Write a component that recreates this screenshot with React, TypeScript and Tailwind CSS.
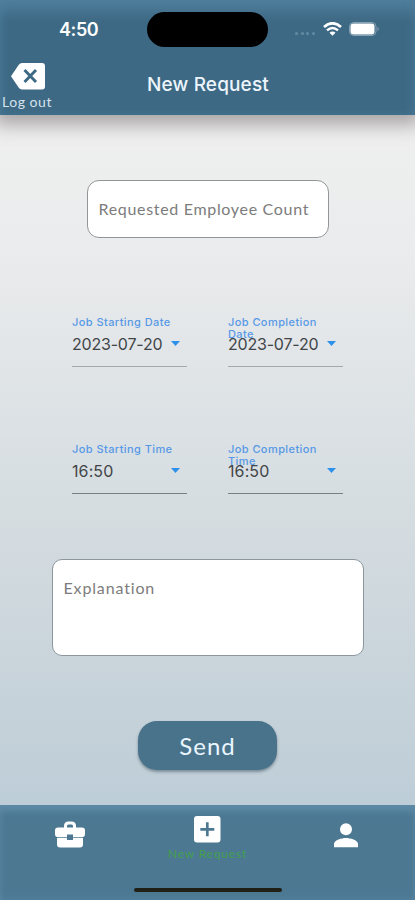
import React from "react";

function BackspaceIcon() {
  return (
    <svg width="34" height="27" viewBox="0 0 34 27" className="block">
      <path d="M11 0H31Q34 0 34 3V23.500Q34 26.500 31 26.500H11Q9 26.500 7.800 24.800L0 13.200L7.800 1.700Q9 0 11 0Z" fill="#fff" />
      <path d="M13.500 7L25 19M25 7L13.500 19" stroke="#3e6984" strokeWidth="2.900" fill="none" />
    </svg>
  );
}

function WifiIcon() {
  return (
    <svg width="19" height="14" viewBox="0 0 19 14" className="block">
      <path d="M1 5Q9.500 -2.500 18 5" fill="none" stroke="#fff" strokeWidth="2.700" />
      <path d="M4 8.400Q9.500 3.500 15 8.400" fill="none" stroke="#fff" strokeWidth="2.500" />
      <path d="M6.500 10.800Q9.500 8.200 12.500 10.800L9.500 13.800Z" fill="#fff" />
    </svg>
  );
}

function BatteryIcon() {
  return (
    <svg width="31" height="15" viewBox="0 0 31 15" className="block">
      <rect x="0.500" y="0.500" width="26.500" height="13" rx="4" fill="none" stroke="#86a2b4" />
      <rect x="1.500" y="1.500" width="24" height="11" rx="3" fill="#fff" />
      <path d="M28.500 4.800Q31 7 28.500 9.200Z" fill="#86a2b4" />
    </svg>
  );
}

function BriefcaseIcon() {
  return (
    <svg width="30" height="27" viewBox="0 0 30 27" className="block">
      <path d="M10.500 7V5Q10.500 2 13.500 2H16.500Q19.500 2 19.500 5V7" stroke="#fff" strokeWidth="3" fill="none" />
      <path d="M3 6.500H27Q30 6.500 30 9.500V13Q30 16.300 26.500 16.300H18V13.500H12V16.300H3.500Q0 16.300 0 13V9.500Q0 6.500 3 6.500Z" fill="#fff" />
      <path d="M2 17H12V19H18V17H28V23.500Q28 26.500 25 26.500H5Q2 26.500 2 23.500Z" fill="#fff" />
    </svg>
  );
}

function PlusIcon() {
  return (
    <svg width="27" height="27" viewBox="0 0 27 27" className="block">
      <rect width="26.500" height="26.500" rx="3" fill="#fff" />
      <path d="M13.300 6.300V20.300M6.300 13.300H20.300" stroke="#4c7892" strokeWidth="2.700" />
    </svg>
  );
}

function PersonIcon() {
  return (
    <svg width="24" height="25" viewBox="0 0 24 25" className="block">
      <circle cx="12" cy="6.200" r="6" fill="#fff" />
      <path d="M0 24.300V21C0 17 8 15 12 15S24 17 24 21V24.300Z" fill="#fff" />
    </svg>
  );
}

function PickerField({ label, value, tone, date }: { label: string; value: string; tone: string; date?: boolean }) {
  return (
    <div className={`relative h-[52px] w-[115px] border-b ${tone}`}>
      <div className="absolute top-px left-0 w-[110px] text-[11px] leading-[12px] font-medium tracking-[0.42px] text-[#5799e6]">
        {label}
      </div>
      <div className="flex h-full items-center justify-between pt-[6px] pr-[7px]">
        <span className={`relative text-[16px] leading-5 text-[#414548] ${date ? "tracking-[-0.2px]" : "tracking-[0.1px]"}`}>{value}</span>
        <svg width="9" height="5" viewBox="0 0 9 5">
          <path d="M0 0H9L4.500 5Z" fill="#2c91ea" />
        </svg>
      </div>
    </div>
  );
}

export default function App() {
  return (
    <div className="flex h-[900px] w-[415px] flex-col overflow-hidden bg-[linear-gradient(#efefef_12%,#ebeced_27%,#dbe1e4_48%,#ccd6dc_70%,#bdcdd7_90%)] font-['Inter',sans-serif]">
      <header className="relative z-10 h-[115px] shrink-0 bg-[#3e6984] text-white shadow-[inset_0_14px_14px_-3px_#4e7e9c,inset_0_0_9px_#447590,0_4px_17px_6px_#aaa6a7]">
        <div className="flex h-[58px] items-center">
          <span className="ml-[59px] w-[88px] pt-px text-[18px] leading-5 font-semibold tracking-[-0.4px]">4:50</span>
          <div className="h-[35px] w-[121px] rounded-full bg-black" />
          <div className="ml-[27px] flex w-[20px] justify-between pt-2">
            <i className="size-[3px] rounded-full bg-[#658aa2]" />
            <i className="size-[3px] rounded-full bg-[#658aa2]" />
            <i className="size-[3px] rounded-full bg-[#658aa2]" />
            <i className="size-[3px] rounded-full bg-[#658aa2]" />
          </div>
          <div className="ml-[8px]"><WifiIcon /></div>
          <div className="ml-[7px]"><BatteryIcon /></div>
        </div>
        <div className="flex h-[57px]">
          <button className="flex w-[56px] flex-col items-center pt-[5px]">
            <BackspaceIcon />
            <span className="mt-[4px] pr-[2px] font-['Lato',sans-serif] text-[14px] leading-4 tracking-[0.55px] whitespace-nowrap text-[#d6e2ed]">Log out</span>
          </button>
          <h1 className="ml-[91px] pt-[15px] text-[19px] leading-6 font-medium tracking-[0.15px] text-[#edf5fc]">New Request</h1>
        </div>
      </header>
      <main className="flex h-[690px] shrink-0 flex-col items-center">
        <div className="mt-[65px] flex h-[58px] w-[242px] items-center rounded-[12px] border border-[#929697] bg-white pl-[11px] font-['Lato',sans-serif] text-[16px] tracking-[0.68px] whitespace-nowrap text-[#7c7c7c]">
          Requested Employee Count
        </div>
        <div className="mt-[77px] flex gap-[41px]">
          <PickerField label="Job Starting Date" value="2023-07-20" tone="border-[#a3a8ab]" date />
          <PickerField label="Job Completion Date" value="2023-07-20" tone="border-[#a3a8ab]" date />
        </div>
        <div className="mt-[75px] flex gap-[41px]">
          <PickerField label="Job Starting Time" value="16:50" tone="border-[#788084]" />
          <PickerField label="Job Completion Time" value="16:50" tone="border-[#788084]" />
        </div>
        <div className="mt-[65px] h-[97px] w-[312px] rounded-[10px] border border-[#8b979d] bg-white pt-[18px] pl-[11px] font-['Lato',sans-serif] text-[16px] leading-5 tracking-[0.85px] text-[#7c7c7c]">
          Explanation
        </div>
        <button className="mt-[65px] h-[49px] w-[139px] rounded-[19px] bg-[#49738b] font-['Lato',sans-serif] text-[24px] tracking-[1px] text-[#e9f6ff] shadow-[0_2px_3px_#7c8d98]">
          Send
        </button>
      </main>
      <footer className="relative h-[95px] shrink-0 bg-[#4c7892] shadow-[inset_0_8px_7px_-2px_#5d8aa6,inset_0_0_8px_#5683a0]">
        <nav className="grid grid-cols-3 justify-items-center">
          <div className="pt-[16px] pl-px"><BriefcaseIcon /></div>
          <div className="flex flex-col items-center pt-[11px]">
            <div className="pl-px"><PlusIcon /></div>
            <span className="mt-[3px] font-['Lato',sans-serif] text-[12px] leading-4 tracking-[0.8px] whitespace-nowrap text-[#43a04e]">New Request</span>
          </div>
          <div className="pt-[18px]"><PersonIcon /></div>
        </nav>
        <div className="absolute top-[83px] left-[134px] h-[4px] w-[148px] rounded-full bg-[#202016]" />
      </footer>
    </div>
  );
}
